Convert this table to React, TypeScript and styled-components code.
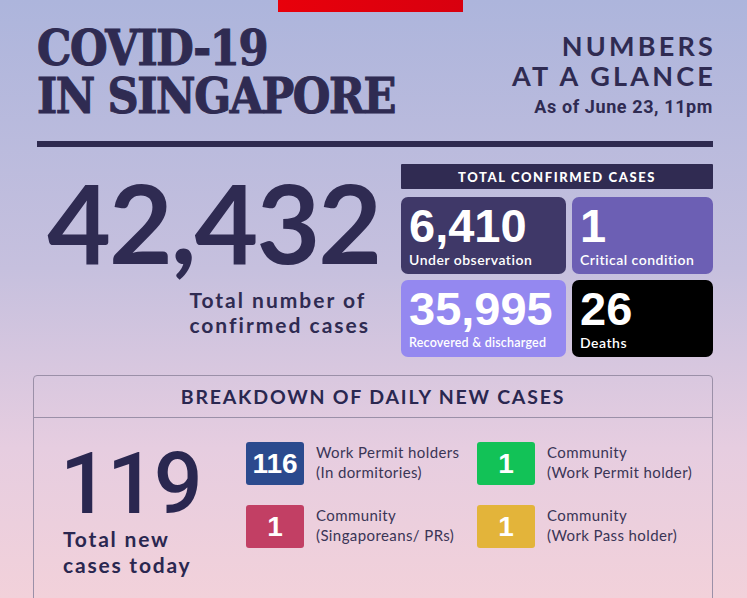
import React from 'react';
import styled, { createGlobalStyle } from 'styled-components';

const GlobalStyle = createGlobalStyle`
  html, body {
    margin: 0;
    padding: 0;
  }
  body {
    width: 747px;
    height: 598px;
    overflow: hidden;
    font-family: "Lato", "Noto Sans", sans-serif;
  }
`;

const Page = styled.div`
  width: 747px;
  height: 598px;
  box-sizing: border-box;
  padding: 0 34px 0 37px;
  background: linear-gradient(180deg, #adb5dc 0%, #c6c0de 45%, #e6cde0 75%, #f2d1da 100%);
  color: #2f2b52;
  overflow: hidden;
`;

const RedTab = styled.div`
  width: 185px;
  height: 12px;
  margin: 0 auto 0 241px;
  background: linear-gradient(90deg, #e8000b, #d8000f);
`;

const Masthead = styled.header`
  display: flex;
  justify-content: space-between;
  align-items: flex-start;
  padding-top: 12px;
`;

const Title = styled.h1`
  margin: 0;
  font-family: "DejaVu Serif Condensed", "DejaVu Serif", serif;
  font-stretch: condensed;
  font-weight: 700;
  font-size: 48px;
  line-height: 48px;
  letter-spacing: -1.4px;
  -webkit-text-stroke: 1px #2f2b52;
  color: #2f2b52;
`;

const TitleLine = styled.span`
  display: block;
  height: 48px;
`;

const Glance = styled.div`
  text-align: right;
  padding-top: 7px;
`;

const GlanceLine = styled.div`
  font-family: "Lato", sans-serif;
  font-weight: 700;
  font-size: 27px;
  line-height: 30px;
  letter-spacing: 3.2px;
  margin-right: -3px;
`;

const AsOf = styled.div`
  font-family: "Roboto", sans-serif;
  font-weight: 700;
  font-size: 18px;
  margin-top: 5px;
  letter-spacing: 0.6px;
`;

const Rule = styled.div`
  height: 6px;
  background: #2e2a50;
  margin-top: 21px;
`;

const Stats = styled.section`
  display: flex;
  justify-content: space-between;
  margin-top: 17px;
`;

const TotalBlock = styled.div`
  display: flex;
  flex-direction: column;
  align-items: flex-end;
  width: 343px;
`;

const BigNumber = styled.div`
  font-family: "Lato", sans-serif;
  font-weight: 700;
  font-size: 110px;
  line-height: 110px;
  letter-spacing: -2px;
  margin-top: 2px;
`;

const TotalCaption = styled.div`
  font-family: "Lato", sans-serif;
  font-weight: 700;
  font-size: 21px;
  line-height: 25px;
  letter-spacing: 2px;
  text-align: left;
  margin-top: 11px;
  margin-right: 10px;
`;

const CaseGrid = styled.div`
  width: 312px;
  display: grid;
  grid-template-columns: 165px 141px;
  grid-template-rows: 27px 77px 77px;
  column-gap: 6px;
  row-gap: 6px;
`;

const GridHeader = styled.div`
  grid-column: 1 / span 2;
  background: #302b52;
  color: #fff;
  font-family: "Lato", sans-serif;
  font-weight: 900;
  font-size: 13px;
  letter-spacing: 1.6px;
  display: flex;
  align-items: center;
  justify-content: center;
  margin-bottom: 2px;
  border-radius: 1px;
`;

const CaseTile = styled.div<{ $bg: string }>`
  background: ${(p) => p.$bg};
  border-radius: 7px;
  color: #fff;
  padding: 6px 6px 0 8px;
  display: flex;
  flex-direction: column;
`;

const TileNumber = styled.div`
  font-family: "Liberation Sans", Arial, sans-serif;
  font-weight: 700;
  font-size: 47px;
  line-height: 46px;
`;

const TileLabel = styled.div<{ $small?: boolean }>`
  font-family: "Lato", sans-serif;
  font-weight: 600;
  font-size: ${(p) => (p.$small ? '12.5px' : '14px')};
  letter-spacing: ${(p) => (p.$small ? '0.2px' : '0.5px')};
  line-height: 16px;
  margin-top: 3px;
  white-space: nowrap;
`;

const Breakdown = styled.section`
  margin: 18px 0 0 -4px;
  border: 1px solid #9b90a8;
  border-radius: 4px;
  height: 260px;
`;

const BreakdownHeader = styled.div`
  height: 41px;
  border-bottom: 1px solid #9b90a8;
  display: flex;
  align-items: center;
  justify-content: center;
  font-family: "Lato", sans-serif;
  font-weight: 700;
  font-size: 19.5px;
  letter-spacing: 1.8px;
  color: #2a2750;
`;

const BreakdownBody = styled.div`
  display: flex;
  align-items: flex-start;
  padding: 24px 0 0 29px;
`;

const NewTotal = styled.div`
  width: 183px;
  flex-shrink: 0;
`;

const NewNumber = styled.div`
  font-family: "Roboto", sans-serif;
  font-weight: 500;
  font-size: 86px;
  line-height: 84px;
  letter-spacing: -2px;
  margin-left: -3px;
  color: #2a2750;
`;

const NewCaption = styled.div`
  font-family: "Lato", sans-serif;
  font-weight: 700;
  font-size: 21px;
  line-height: 26px;
  letter-spacing: 1.8px;
  color: #2a2750;
  margin-top: 0;
`;

const BadgeGrid = styled.div`
  display: grid;
  grid-template-columns: 231px 230px;
  align-content: start;
  row-gap: 20px;
`;

const BadgeItem = styled.div`
  display: flex;
  align-items: flex-start;
  gap: 12px;
`;

const Badge = styled.div<{ $bg: string }>`
  width: 58px;
  height: 43px;
  border-radius: 3px;
  background: ${(p) => p.$bg};
  color: #fff;
  font-family: "Liberation Sans", Arial, sans-serif;
  font-weight: 700;
  font-size: 28px;
  display: flex;
  align-items: center;
  justify-content: center;
  flex-shrink: 0;
`;

const BadgeText = styled.div`
  font-family: "Lato", sans-serif;
  font-size: 15px;
  line-height: 19.5px;
  letter-spacing: 0.4px;
  color: #3a3556;
  margin-top: 1px;
  white-space: nowrap;
`;

const tiles = [
  { value: '6,410', label: 'Under observation', bg: '#3f3868' },
  { value: '1', label: 'Critical condition', bg: '#6c5fb4' },
  { value: '35,995', label: 'Recovered & discharged', bg: '#9488f0', small: true },
  { value: '26', label: 'Deaths', bg: '#000000' },
];

const badges = [
  { value: '116', lines: ['Work Permit holders', '(In dormitories)'], bg: '#2b4a8e' },
  { value: '1', lines: ['Community', '(Work Permit holder)'], bg: '#12c257' },
  { value: '1', lines: ['Community', '(Singaporeans/ PRs)'], bg: '#c23f64' },
  { value: '1', lines: ['Community', '(Work Pass holder)'], bg: '#e3b43a' },
];

export default function App() {
  return (
    <>
      <GlobalStyle />
      <Page>
        <RedTab />
        <Masthead>
          <Title>
            <TitleLine>COVID-19</TitleLine>
            <TitleLine>IN SINGAPORE</TitleLine>
          </Title>
          <Glance>
            <GlanceLine>NUMBERS</GlanceLine>
            <GlanceLine>AT A GLANCE</GlanceLine>
            <AsOf>As of June 23, 11pm</AsOf>
          </Glance>
        </Masthead>
        <Rule />
        <Stats>
          <TotalBlock>
            <BigNumber>42,432</BigNumber>
            <TotalCaption>
              Total number of
              <br />
              confirmed cases
            </TotalCaption>
          </TotalBlock>
          <CaseGrid>
            <GridHeader>TOTAL CONFIRMED CASES</GridHeader>
            {tiles.map((t) => (
              <CaseTile key={t.label} $bg={t.bg}>
                <TileNumber>{t.value}</TileNumber>
                <TileLabel $small={t.small}>{t.label}</TileLabel>
              </CaseTile>
            ))}
          </CaseGrid>
        </Stats>
        <Breakdown>
          <BreakdownHeader>BREAKDOWN OF DAILY NEW CASES</BreakdownHeader>
          <BreakdownBody>
            <NewTotal>
              <NewNumber>119</NewNumber>
              <NewCaption>
                Total new
                <br />
                cases today
              </NewCaption>
            </NewTotal>
            <BadgeGrid>
              {badges.map((b) => (
                <BadgeItem key={b.lines.join()}>
                  <Badge $bg={b.bg}>{b.value}</Badge>
                  <BadgeText>
                    {b.lines[0]}
                    <br />
                    {b.lines[1]}
                  </BadgeText>
                </BadgeItem>
              ))}
            </BadgeGrid>
          </BreakdownBody>
        </Breakdown>
      </Page>
    </>
  );
}
